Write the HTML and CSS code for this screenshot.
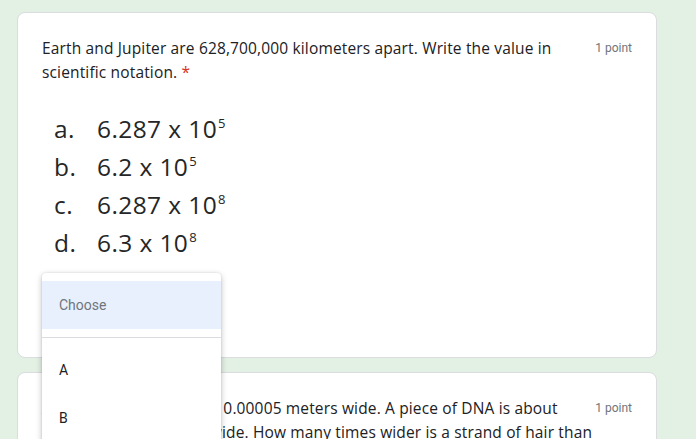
FILE: index.html
```html
<!DOCTYPE html>
<html>
<head>
<meta charset="utf-8">
<link rel="stylesheet" href="styles.css">
</head>
<body>
<div class="page">
  <div class="card card-first">
    <div class="head">
      <div class="question">Earth and Jupiter are 628,700,000 kilometers apart. Write the value in scientific notation. <span class="req">*</span></div>
      <div class="points">1 point</div>
    </div>
    <div class="options">
      <div class="opt"><span class="lbl">a.</span><span>6.287 x 10<sup>5</sup></span></div>
      <div class="opt"><span class="lbl">b.</span><span>6.2 x 10<sup>5</sup></span></div>
      <div class="opt"><span class="lbl">c.</span><span>6.287 x 10<sup>8</sup></span></div>
      <div class="opt"><span class="lbl">d.</span><span>6.3 x 10<sup>8</sup></span></div>
    </div>
  </div>
  <div class="card">
    <div class="head">
      <div class="question">A strand of hair is about 0.00005 meters wide. A piece of DNA is about <span class="num">0.0000000025</span> meters wide. How many times wider is a strand of hair than a piece of DNA?</div>
      <div class="points">1 point</div>
    </div>
  </div>
  <div class="menu">
    <div class="menu-item selected">Choose</div>
    <div class="divider"></div>
    <div class="menu-item">A</div>
    <div class="menu-item">B</div>
  </div>
</div>
</body>
</html>
```
FILE: styles.css
```css
html, body {
  margin: 0;
  padding: 0;
  background: #e3f0e4;
  overflow: hidden;
}
.page {
  position: relative;
  padding: 12px 0 0 17px;
  display: flex;
  flex-direction: column;
  gap: 14px;
  width: 640px;
}
.card {
  background: #fff;
  border: 1px solid #dadce0;
  border-radius: 8px;
  padding: 23px 24px 24px 24px;
  width: 590px;
}
.card-first {
  height: 297px;
}
.head {
  display: flex;
  justify-content: space-between;
  align-items: flex-start;
}
.question {
  font-family: "Open Sans", sans-serif;
  font-size: 15.5px;
  letter-spacing: 0.15px;
  line-height: 24px;
  color: #202124;
  width: 553px;
}
.num {
  letter-spacing: 0.5px;
}
.req {
  color: #d93025;
}
.points {
  font-family: Roboto, sans-serif;
  font-size: 12px;
  line-height: 24px;
  color: #70757a;
  white-space: nowrap;
}
.options {
  margin-top: 25px;
  padding-left: 12px;
  font-family: "Open Sans", sans-serif;
  font-size: 24.5px;
  letter-spacing: 0.4px;
  color: #262626;
}
.opt {
  display: flex;
  height: 38px;
  align-items: center;
}
.lbl {
  width: 43px;
}
sup {
  font-size: 13px;
  letter-spacing: 0;
  vertical-align: 10px;
  line-height: 0;
  margin-left: 1px;
}
.menu {
  position: absolute;
  left: 42px;
  top: 273px;
  width: 179px;
  height: 200px;
  background: #fff;
  border-radius: 4px;
  box-shadow: 0 2px 6px rgba(0,0,0,0.25), 0 0 2px rgba(0,0,0,0.12);
  padding-top: 8px;
  font-family: Roboto, sans-serif;
  font-size: 14px;
  color: #202124;
}
.menu-item {
  height: 48px;
  display: flex;
  align-items: center;
  padding-left: 17px;
}
.menu-item.selected {
  background: #e8f0fe;
  color: #70757a;
}
.divider {
  height: 1px;
  background: #dadce0;
  margin: 8px 0;
}
```
